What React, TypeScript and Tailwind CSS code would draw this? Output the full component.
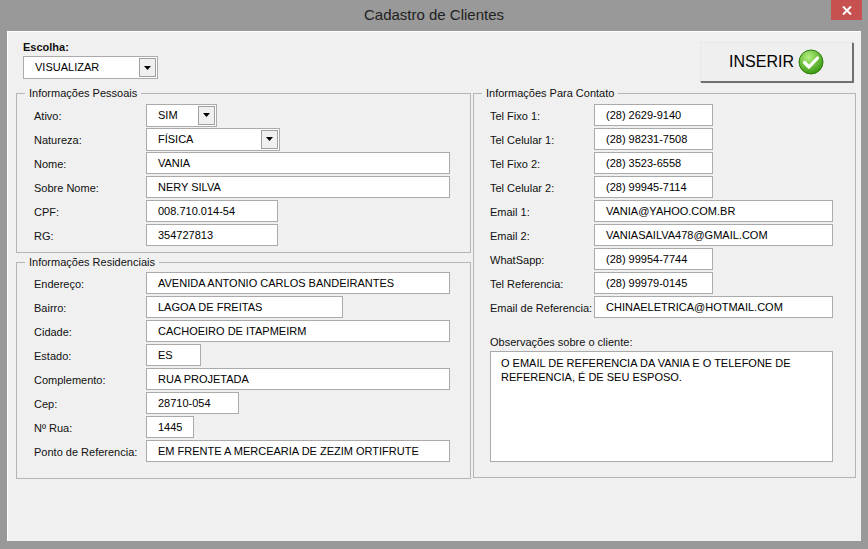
import React from "react";

const F = { fontFamily: '"Liberation Sans", Arial, sans-serif' };

function Input({ w, v }: { w: string; v: string }) {
  return (
    <div className={`${w} h-[22px] bg-white border border-[#ababab] flex items-center pl-[11px] text-[11px] text-black whitespace-nowrap overflow-hidden`}>{v}</div>
  );
}

function Drop({ w, v }: { w: string; v: string }) {
  return (
    <div className={`${w} h-[23px] bg-white border border-[#ababab] flex items-center text-[11px] text-black`}>
      <span className="flex-1 pl-[11px]">{v}</span>
      <div className="w-[17px] h-[19px] mr-[1px] bg-[#f0f0f0] border border-[#a0a0a0] flex items-center justify-center">
        <svg width="7" height="4" viewBox="0 0 7 4"><path d="M0 0h7L3.5 4z" fill="#000" /></svg>
      </div>
    </div>
  );
}

function Row({ label, lw, children }: { label: string; lw: string; children: React.ReactNode }) {
  return (
    <div className="flex items-center h-[24px]">
      <div className={`${lw} text-[11px] text-[#111] pt-[3px] whitespace-nowrap`}>{label}</div>
      {children}
    </div>
  );
}

function Group({ title, className, children }: { title: string; className: string; children: React.ReactNode }) {
  return (
    <div className={`relative border border-[#b5b5b5] ${className}`}>
      <div className="absolute -top-[8px] left-[8px] bg-[#f0f0f0] px-[4px] text-[11px] leading-[14px] text-[#111] whitespace-nowrap">{title}</div>
      {children}
    </div>
  );
}

export default function App() {
  return (
    <div style={F} className="w-[868px] h-[549px] bg-[#999999] flex flex-col">
      <div className="h-[31px] relative flex items-center justify-center">
        <span className="text-[15px] text-[#222]">Cadastro de Clientes</span>
        <div className="absolute right-[6px] top-0 w-[31px] h-[20px] bg-[#c75050] flex items-center justify-center">
          <svg width="10" height="9" viewBox="0 0 10 9"><path d="M1 0.5l8 8M9 0.5l-8 8" stroke="#fff" strokeWidth="2" /></svg>
        </div>
      </div>
      <div className="mx-[7px] h-[510px] bg-[#f0f0f0] border-t border-l border-[#fff] relative">
        <div className="flex justify-between pl-[15px] pr-[8px] pt-[8px]">
          <div>
            <div className="text-[11px] font-bold text-[#111] leading-[14px]">Escolha:</div>
            <div className="mt-[2px]"><Drop w="w-[135px]" v="VISUALIZAR" /></div>
          </div>
          <div className="w-[153px] h-[40px] mt-[2px] border border-[#707070] border-t-[#e8e8e8] border-l-[#e8e8e8] bg-[#efefef] flex items-center justify-center gap-[4px] shadow-[1px_1px_0_#707070]">
            <span className="text-[16px] text-black">INSERIR</span>
            <svg width="26" height="26" viewBox="0 0 26 26">
              <defs>
                <radialGradient id="g" cx="40%" cy="30%" r="70%">
                  <stop offset="0" stopColor="#b5f080" />
                  <stop offset="1" stopColor="#3a9a10" />
                </radialGradient>
              </defs>
              <circle cx="13" cy="13" r="12" fill="url(#g)" stroke="#2f7d10" />
              <path d="M6.5 13.5l4.5 4.5 8.5-9" stroke="#fff" strokeWidth="3.2" fill="none" strokeLinecap="round" strokeLinejoin="round" />
            </svg>
          </div>
        </div>
        <div className="flex pl-[8px] mt-[11px] gap-[2px]">
          <div className="flex flex-col gap-[9px]">
            <Group title="Informações Pessoais" className="w-[455px] h-[160px] pt-[9px] pl-[17px]">
              <Row label="Ativo:" lw="w-[112px]"><Drop w="w-[71px]" v="SIM" /></Row>
              <Row label="Natureza:" lw="w-[112px]"><Drop w="w-[134px]" v="FÍSICA" /></Row>
              <Row label="Nome:" lw="w-[112px]"><Input w="w-[304px]" v="VANIA" /></Row>
              <Row label="Sobre Nome:" lw="w-[112px]"><Input w="w-[304px]" v="NERY SILVA" /></Row>
              <Row label="CPF:" lw="w-[112px]"><Input w="w-[132px]" v="008.710.014-54" /></Row>
              <Row label="RG:" lw="w-[112px]"><Input w="w-[132px]" v="354727813" /></Row>
            </Group>
            <Group title="Informações Residenciais" className="w-[455px] h-[217px] pt-[8px] pl-[17px]">
              <Row label="Endereço:" lw="w-[112px]"><Input w="w-[304px]" v="AVENIDA ANTONIO CARLOS BANDEIRANTES" /></Row>
              <Row label="Bairro:" lw="w-[112px]"><Input w="w-[197px]" v="LAGOA DE FREITAS" /></Row>
              <Row label="Cidade:" lw="w-[112px]"><Input w="w-[304px]" v="CACHOEIRO DE ITAPMEIRM" /></Row>
              <Row label="Estado:" lw="w-[112px]"><Input w="w-[55px]" v="ES" /></Row>
              <Row label="Complemento:" lw="w-[112px]"><Input w="w-[304px]" v="RUA PROJETADA" /></Row>
              <Row label="Cep:" lw="w-[112px]"><Input w="w-[93px]" v="28710-054" /></Row>
              <Row label="Nº Rua:" lw="w-[112px]"><Input w="w-[48px]" v="1445" /></Row>
              <Row label="Ponto de Referencia:" lw="w-[112px]"><Input w="w-[304px]" v="EM FRENTE A MERCEARIA DE ZEZIM ORTIFRUTE" /></Row>
            </Group>
          </div>
          <Group title="Informações Para Contato" className="w-[383px] h-[385px] pt-[9px] pl-[16px]">
            <Row label="Tel Fixo 1:" lw="w-[104px]"><Input w="w-[119px]" v="(28) 2629-9140" /></Row>
            <Row label="Tel Celular 1:" lw="w-[104px]"><Input w="w-[119px]" v="(28) 98231-7508" /></Row>
            <Row label="Tel Fixo 2:" lw="w-[104px]"><Input w="w-[119px]" v="(28) 3523-6558" /></Row>
            <Row label="Tel Celular 2:" lw="w-[104px]"><Input w="w-[119px]" v="(28) 99945-7114" /></Row>
            <Row label="Email 1:" lw="w-[104px]"><Input w="w-[239px]" v="VANIA@YAHOO.COM.BR" /></Row>
            <Row label="Email 2:" lw="w-[104px]"><Input w="w-[239px]" v="VANIASAILVA478@GMAIL.COM" /></Row>
            <Row label="WhatSapp:" lw="w-[104px]"><Input w="w-[119px]" v="(28) 99954-7744" /></Row>
            <Row label="Tel Referencia:" lw="w-[104px]"><Input w="w-[119px]" v="(28) 99979-0145" /></Row>
            <Row label="Email de Referencia:" lw="w-[104px]"><Input w="w-[239px]" v="CHINAELETRICA@HOTMAIL.COM" /></Row>
            <div className="text-[11px] text-[#111] mt-[16px] leading-[14px]">Observações sobre o cliente:</div>
            <div className="w-[343px] h-[111px] mt-[2px] bg-white border border-[#ababab] px-[10px] pt-[4px] text-[11px] leading-[14px] text-black">
              O EMAIL DE REFERENCIA DA VANIA E O TELEFONE DE REFERENCIA, É DE SEU ESPOSO.
            </div>
          </Group>
        </div>
      </div>
    </div>
  );
}
